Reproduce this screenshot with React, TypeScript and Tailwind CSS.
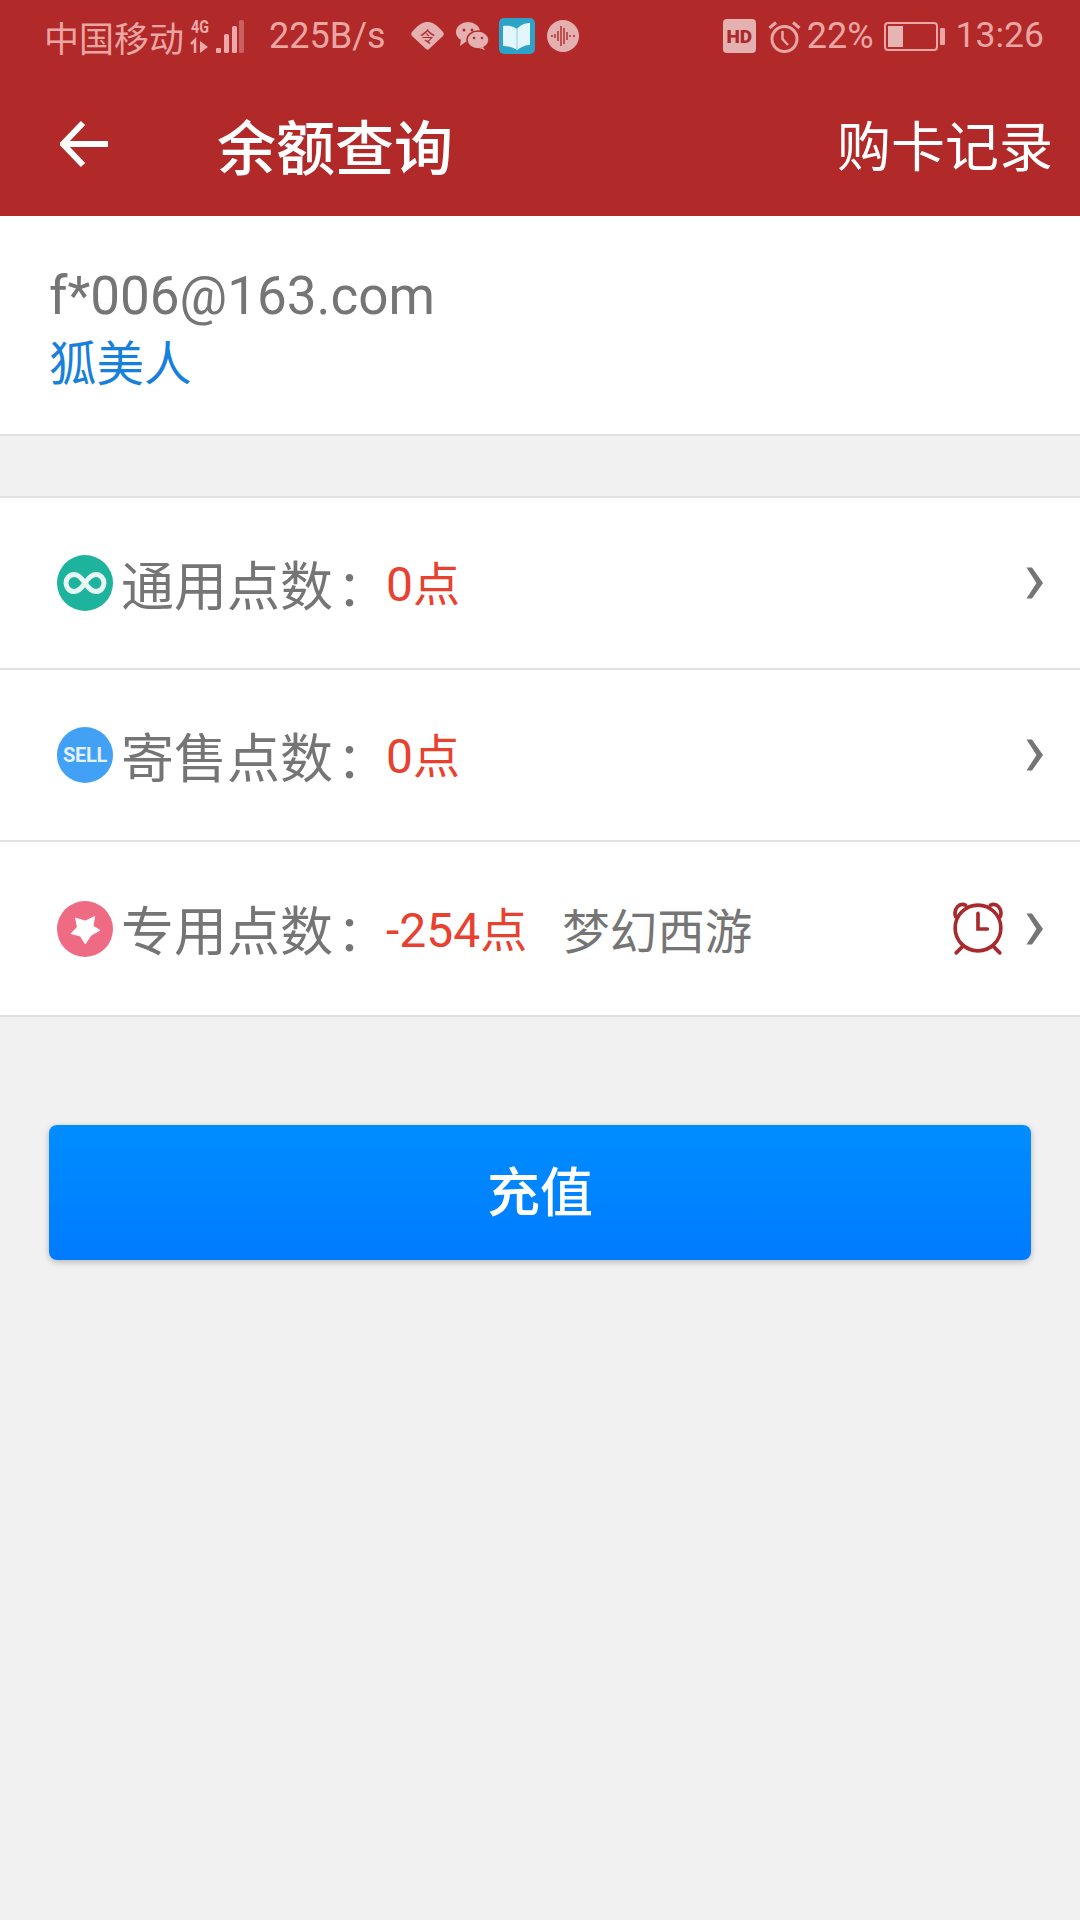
const latin = "font-['Roboto','Noto_Sans_CJK_SC',sans-serif]";
const cjk = "font-['Noto_Sans_CJK_SC',sans-serif]";

function Chevron() {
  return (
    <svg width="18" height="32" viewBox="0 0 18 32" className="shrink-0">
      <path d="M0.500 0.500 H6 L17 16 L6 31.500 H0.500 L10.500 16 Z" fill="#757575" />
    </svg>
  );
}

function Infinity8() {
  return (
    <svg width="56" height="56" viewBox="0 0 56 56" className="shrink-0">
      <circle cx="28" cy="28" r="28" fill="#1eb39c" />
      <path
        d="M28 28 C24 22 21 19.500 17 19.500 C12.500 19.500 9 23.500 9 28 C9 32.500 12.500 36.500 17 36.500 C21 36.500 24 34 28 28 C32 22 35 19.500 39 19.500 C43.500 19.500 47 23.500 47 28 C47 32.500 43.500 36.500 39 36.500 C35 36.500 32 34 28 28 Z"
        fill="none"
        stroke="#e6f7f4"
        strokeWidth="5"
      />
    </svg>
  );
}

function Sell() {
  return (
    <div className="w-[56px] h-[56px] rounded-full bg-[#42a0f5] flex items-center justify-center shrink-0">
      <span className="font-['Roboto',sans-serif] font-bold text-[20px] leading-none text-[#e3f1fe] tracking-[-0.3px]">SELL</span>
    </div>
  );
}

function StarBadge() {
  return (
    <svg width="56" height="56" viewBox="0 0 56 56" className="shrink-0">
      <circle cx="28" cy="28" r="28" fill="#ee6b83" />
      <path
        d="M18.500 17 L28.300 20 L37.700 15.500 L36 25 L43 29.300 L34 34.300 L28.300 43 L23.300 35 L14 32.700 L20.300 26 Z"
        fill="#fff"
        stroke="#fff"
        strokeWidth="0.800"
        strokeLinejoin="round"
      />
    </svg>
  );
}

function RedClock() {
  return (
    <svg width="50" height="54" viewBox="2 1 48 52" className="shrink-0">
      <g fill="none" stroke="#a82a2d" strokeWidth="3.500" strokeLinecap="round">
        <circle cx="26" cy="26" r="22" />
        <path d="M26 12 V27 H35" />
        <path d="M4.500 15 C2 8 8 1 14 4" />
        <path d="M47.500 15 C50 8 44 1 38 4" />
        <path d="M11 44 L5 50" />
        <path d="M41 44 L47 50" />
      </g>
    </svg>
  );
}

function Signal() {
  return (
    <svg width="55" height="38" viewBox="0 0 55 38" className="shrink-0">
      <text x="1" y="16" fontSize="18" fontWeight="700" fontFamily="Roboto" fill="#eda9a9" textLength="18" lengthAdjust="spacingAndGlyphs">4G</text>
      <path d="M1 27 l4 -4 v13" stroke="#eda9a9" strokeWidth="2.500" fill="none" />
      <path d="M10 24 v12 l8 -6 z" fill="#eda9a9" />
      <rect x="26" y="31" width="5" height="5" rx="1" fill="#eda9a9" />
      <rect x="34" y="17" width="5" height="19" rx="1.500" fill="#eda9a9" />
      <rect x="42" y="9" width="5" height="27" rx="1.500" fill="#eda9a9" />
      <rect x="49" y="3" width="5" height="33" rx="1.500" fill="#c8625f" />
    </svg>
  );
}

function StatusIcons() {
  return (
    <div className="flex items-center ml-[25px]">
      <svg width="33" height="28" viewBox="0 0 33 28" className="shrink-0">
        <path d="M16.500 0 C21 0 25 2 32 10 C33 11.500 33 12.500 32 14 L18 27 C17 28 16 28 15 27 L1 14 C0 12.500 0 11.500 1 10 C8 2 12 0 16.500 0 Z" fill="#e5b0b0" />
        <text x="16.500" y="20" fontSize="15" textAnchor="middle" fontFamily="Noto Sans CJK SC" fill="#b02a2a">令</text>
      </svg>
      <svg width="33" height="28" viewBox="0 0 33 28" className="shrink-0 ml-[12px]">
        <ellipse cx="12" cy="10" rx="12" ry="10" fill="#e5b0b0" />
        <path d="M5 17 L4 24 L11 19 Z" fill="#e5b0b0" />
        <ellipse cx="22" cy="18" rx="11" ry="9" fill="#e5b0b0" stroke="#b02a2a" strokeWidth="1.500" />
        <path d="M27 25 L29 28 L23 26 Z" fill="#e5b0b0" />
        <circle cx="8" cy="8" r="1.500" fill="#b02a2a" />
        <circle cx="16" cy="8" r="1.500" fill="#b02a2a" />
        <circle cx="18" cy="16" r="1.300" fill="#b02a2a" />
        <circle cx="26" cy="16" r="1.300" fill="#b02a2a" />
      </svg>
      <svg width="36" height="36" viewBox="0 0 36 36" className="shrink-0 ml-[10px]">
        <rect x="0" y="0" width="36" height="36" rx="5" fill="#2ea3c9" />
        <path d="M4 8 C9 7 14 8 18 11 C21 7 26 5 31 5 V27 C26 27 22 29 18 32 C14 29 9 28 4 28 Z" fill="#e2f6fb" />
        <path d="M18 11 V32" stroke="#a9dcea" strokeWidth="1.500" />
      </svg>
      <svg width="32" height="32" viewBox="0 0 32 32" className="shrink-0 ml-[12px]">
        <circle cx="16" cy="16" r="16" fill="#e5b0b0" />
        <path d="M4 16 h2 M8 14 v4 M11 11 v10 M14 6 v20 M17 8 v16 M20 12 v8 M23 15 v2 M26 16 h2" stroke="#b02a2a" strokeWidth="1.400" />
      </svg>
    </div>
  );
}

function RightStatus() {
  return (
    <div className="flex items-center">
      <div className="w-[33px] h-[34px] rounded-[4px] bg-[#e5b0b0] flex items-center justify-center">
        <span className="font-['Roboto',sans-serif] font-black text-[19px] leading-none text-[#ab2a2a]">HD</span>
      </div>
      <svg width="33" height="33" viewBox="0 0 33 33" className="shrink-0 ml-[12px]">
        <g fill="none" stroke="#e9a6a4" strokeWidth="3">
          <circle cx="16.500" cy="19" r="12.500" />
          <path d="M14.500 11 V19 L20 25" strokeWidth="2.500" />
          <path d="M1.500 8 L8 2.500" />
          <path d="M31.500 8 L25 2.500" />
        </g>
      </svg>
      <span className={`${latin} text-[36px] leading-none text-[#eba6a4] ml-[6px]`}>22%</span>
      <div className="ml-[10px] w-[54px] h-[29px] rounded-[4px] border-2 border-[#e9a6a4] p-[2px] flex">
        <div className="w-[15px] h-full bg-[#e5b4b3]" />
      </div>
      <div className="w-[5px] h-[17px] bg-[#e9a6a4] rounded-[1px] ml-[2px]" />
      <span className={`${latin} text-[35.500px] leading-none text-[#eba6a4] ml-[11px]`}>13:26</span>
    </div>
  );
}

function Row({ icon, label, value, extra, tall }: { icon: React.ReactNode; label: string; value: string; extra?: string; tall?: boolean }) {
  return (
    <div className={`flex items-center bg-white border-b-2 border-[#e1e1e1] pl-[57px] pr-[36px] ${tall ? "h-[175px]" : "h-[172px]"}`}>
      {icon}
      <span className={`ml-[8px] w-[265px] whitespace-nowrap text-[53px] leading-none text-[#757575] ${cjk} shrink-0`}>
        {label}
        <span className="ml-[4px] text-[50px]">：</span>
      </span>
      <span className={`${latin} text-[48px] leading-none text-[#e8412f]`}>
        {value}
        <span className={`text-[47px] ${cjk}`}>点</span>
      </span>
      {extra && (
        <span className={`ml-[35px] text-[47.500px] leading-none text-[#757575] ${cjk}`}>{extra}</span>
      )}
      <div className="flex-1" />
      {extra && (
        <div className="mr-[23px]">
          <RedClock />
        </div>
      )}
      <Chevron />
    </div>
  );
}

export default function App() {
  return (
    <div className="w-[1080px] h-[1920px] bg-[#f1f1f1] flex flex-col overflow-hidden">
      <header className="h-[216px] bg-[#b12928] shrink-0 flex flex-col">
        <div className="h-[72px] pl-[44px] pr-[36px] flex items-center justify-between">
          <div className="flex items-center">
            <span className={`text-[35px] leading-none text-[#eba6a4] ${cjk}`}>中国移动</span>
            <div className="ml-[6px]"><Signal /></div>
            <span className={`${latin} text-[36px] leading-none text-[#eba6a4] ml-[24px]`}>225B/s</span>
            <StatusIcons />
          </div>
          <RightStatus />
        </div>
        <div className="flex-1 flex items-center pl-[60px] pr-[27px]">
          <svg width="50" height="50" viewBox="0 0 50 50" className="shrink-0">
            <path d="M48 25 H4 M23 4 L3 25 L23 46" fill="none" stroke="#fff" strokeWidth="6" />
          </svg>
          <span className={`ml-[107px] text-[59px] leading-none font-medium text-white ${cjk}`}>余额查询</span>
          <div className="flex-1" />
          <span className={`text-[54px] leading-none text-white ${cjk}`}>购卡记录</span>
        </div>
      </header>
      <section className="h-[220px] bg-white border-b-2 border-[#e1e1e1] pl-[49px] pt-[50px] shrink-0">
        <div className={`${latin} text-[53px] leading-[60px] text-[#757575]`}>f*006@163.com</div>
        <div className={`text-[47.500px] leading-[60px] text-[#1780dc] ${cjk} mt-[5px]`}>狐美人</div>
      </section>
      <div className="h-[60px] shrink-0" />
      <div className="border-t-2 border-[#e1e1e1] shrink-0">
        <Row icon={<Infinity8 />} label="通用点数" value="0" />
        <Row icon={<Sell />} label="寄售点数" value="0" />
        <Row icon={<StarBadge />} label="专用点数" value="-254" extra="梦幻西游" tall />
      </div>
      <div className="px-[49px] pt-[108px]">
        <button className={`w-full h-[135px] pb-[6px] rounded-[8px] bg-gradient-to-b from-[#008dff] to-[#007bff] shadow-[0_2px_6px_rgba(0,0,0,0.25)] text-white text-[53px] font-medium ${cjk} flex items-center justify-center`}>
          充值
        </button>
      </div>
    </div>
  );
}
